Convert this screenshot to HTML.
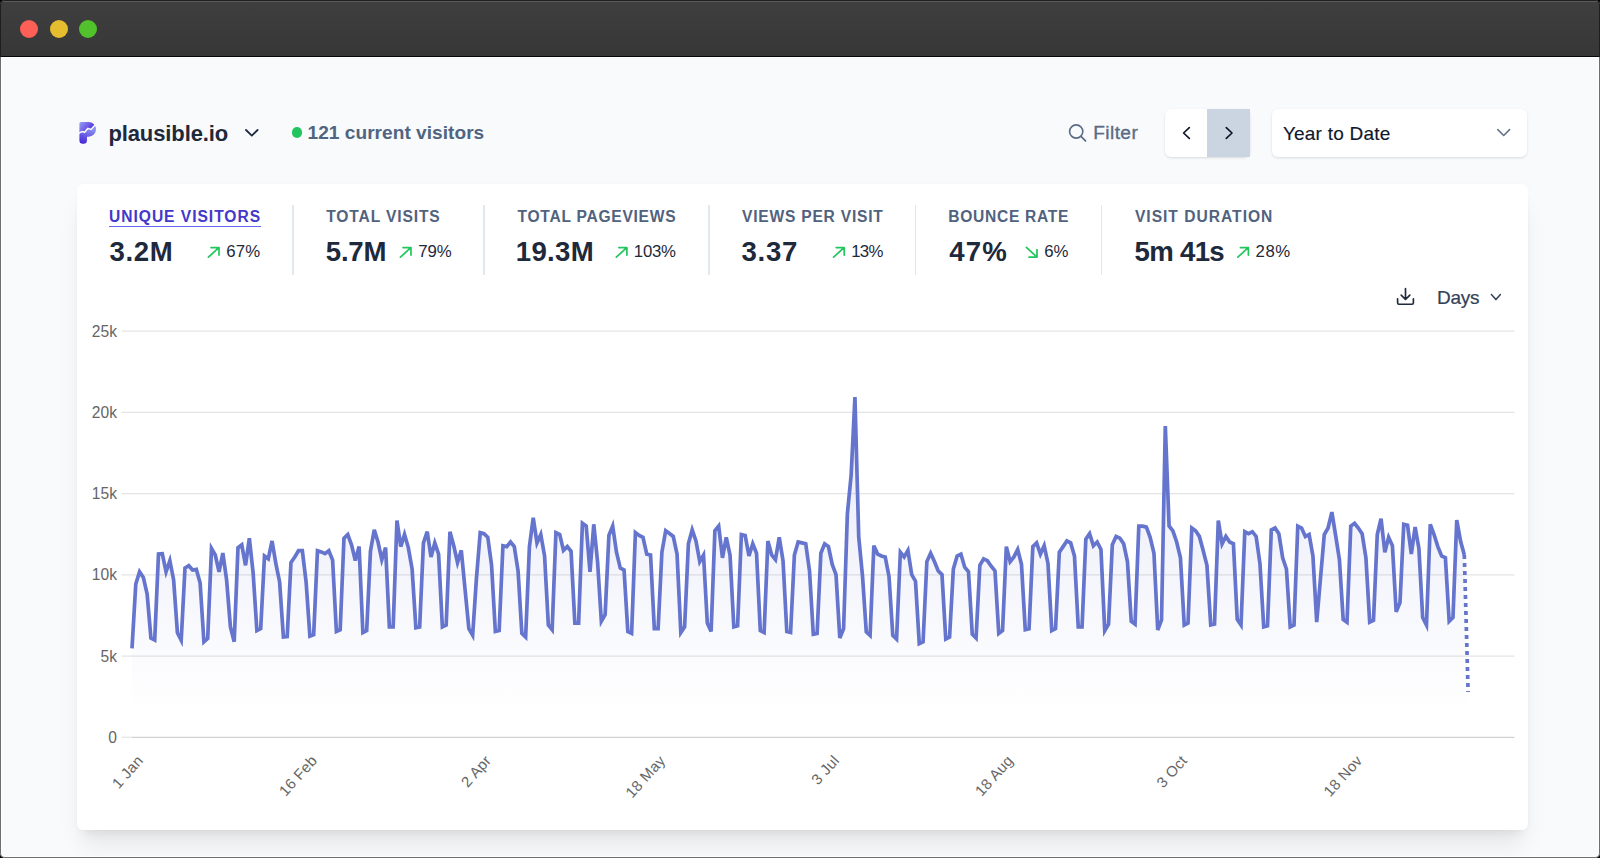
<!DOCTYPE html>
<html><head><meta charset="utf-8"><style>
html,body{margin:0;padding:0;width:1600px;height:858px;overflow:hidden;background:#000;}
body{font-family:"Liberation Sans",sans-serif;position:relative;}
.win{position:absolute;left:0;top:0;width:1600px;height:858px;border-radius:5px;overflow:hidden;background:#f8fafc;}
.frt{position:absolute;left:0;top:0;width:1600px;height:57px;box-sizing:border-box;border:1px solid #1e1e1e;border-bottom:0;border-radius:5px 5px 0 0;}
.frh{position:absolute;left:3px;top:1px;width:1594px;height:1px;background:#5c5c5c;}
.frc{position:absolute;left:0;top:57px;width:1600px;height:801px;box-sizing:border-box;border:1px solid #6e6e6e;border-top:0;border-radius:0 0 5px 5px;}
.frw{position:absolute;left:1px;top:57px;width:1598px;height:800px;box-sizing:border-box;border:1px solid #fff;border-top-color:#fff;border-radius:0 0 4px 4px;}
.bar{position:absolute;left:0;top:0;width:1600px;height:56px;background:linear-gradient(#3f3f3f,#373737);border-bottom:1px solid #080808;}
.dot{position:absolute;top:20px;width:18px;height:18px;border-radius:50%;}
.t{position:absolute;white-space:nowrap;}
.ic{position:absolute;overflow:visible;}
.card{position:absolute;left:77px;top:184px;width:1450.5px;height:646px;background:#fff;border-radius:6px;box-shadow:0 20px 25px -5px rgba(0,0,0,0.08),0 8px 10px -6px rgba(0,0,0,0.08),0 0 3px rgba(0,0,0,0.03);}
.btn{position:absolute;background:#fff;border-radius:6px;box-shadow:0 1px 3px rgba(0,0,0,0.1),0 1px 2px -1px rgba(0,0,0,0.1);}
.chart{position:absolute;left:0;top:0;}
.xl{position:absolute;width:200px;text-align:right;font-size:15px;line-height:15px;letter-spacing:0.25px;color:#666;transform-origin:100% 50%;transform:rotate(-48deg);white-space:nowrap;}
</style></head><body>
<div class="win">
<div class="bar">
<div class="dot" style="left:20px;background:#fe5f57;"></div>
<div class="dot" style="left:49.5px;background:#e6bd2e;"></div>
<div class="dot" style="left:79px;background:#52c22c;"></div>
</div>
<!-- logo -->
<svg class="ic" style="left:0;top:0" width="200" height="200" viewBox="0 0 200 200">
<defs>
<linearGradient id="lg1" gradientUnits="userSpaceOnUse" x1="80" y1="122" x2="93" y2="132"><stop offset="0" stop-color="#959cf4"/><stop offset="1" stop-color="#4a22d9"/></linearGradient>
<linearGradient id="lg2" gradientUnits="userSpaceOnUse" x1="88" y1="127" x2="82" y2="144"><stop offset="0" stop-color="#8e94f2"/><stop offset="1" stop-color="#4322d6"/></linearGradient>
<clipPath id="cpt"><path d="M70 110 H110 V119 L95.5 124.5 L91 129.4 L87.8 128.4 L84.6 132.3 L82.1 131.6 L70 137 Z"/></clipPath>
<clipPath id="cpb"><path d="M70 160 H110 V119 L95.5 124.5 L91 129.4 L87.8 128.4 L84.6 132.3 L82.1 131.6 L70 137 Z"/></clipPath>
</defs>
<path d="M79.4 123.5 Q79.4 122 81 122 H88.7 A7.35 7.35 0 0 1 88.7 136.7 H87 V140.3 A3.5 3.5 0 0 1 83.5 143.8 H82.9 A3.5 3.5 0 0 1 79.4 140.3 Z" fill="url(#lg1)" clip-path="url(#cpt)"/>
<path d="M79.4 123.5 Q79.4 122 81 122 H88.7 A7.35 7.35 0 0 1 88.7 136.7 H87 V140.3 A3.5 3.5 0 0 1 83.5 143.8 H82.9 A3.5 3.5 0 0 1 79.4 140.3 Z" fill="url(#lg2)" clip-path="url(#cpb)"/>
<path d="M78.5 133.4 L82.1 131.6 L84.6 132.3 L87.8 128.4 L91 129.4 L95.5 124.5" fill="none" stroke="#f8fafc" stroke-width="1.5"/>
</svg>
<svg class="ic" style="left:0;top:0" width="300" height="200" viewBox="0 0 300 200"><path d="M246 130 L251.8 135.6 L257.6 130" fill="none" stroke="#1f2a40" stroke-width="1.8" stroke-linecap="round" stroke-linejoin="round"/></svg>
<div style="position:absolute;left:291.7px;top:127.3px;width:10.6px;height:10.6px;border-radius:50%;background:#22c55e"></div>
<svg class="ic" style="left:0;top:0" width="1600" height="200" viewBox="0 0 1600 200">
<circle cx="1076.2" cy="131.5" r="6.6" fill="none" stroke="#5b6b85" stroke-width="1.6"/>
<path d="M1081 136.3 L1085.5 140.8" stroke="#5b6b85" stroke-width="1.7" stroke-linecap="round"/>
</svg>
<div class="btn" style="left:1164.8px;top:108.7px;width:85.3px;height:48.3px;"></div>
<div style="position:absolute;left:1207.3px;top:108.7px;width:42.8px;height:48.3px;background:#cbd5e1;"></div>
<svg class="ic" style="left:0;top:0" width="1600" height="200" viewBox="0 0 1600 200">
<path d="M1189.3 127.6 L1183.6 133 L1189.3 138.4" fill="none" stroke="#0f172a" stroke-width="1.7" stroke-linecap="round" stroke-linejoin="round"/>
<path d="M1226.3 127.6 L1232 133 L1226.3 138.4" fill="none" stroke="#0f172a" stroke-width="1.7" stroke-linecap="round" stroke-linejoin="round"/>
</svg>
<div class="btn" style="left:1272px;top:109px;width:255.2px;height:48px;"></div>
<svg class="ic" style="left:0;top:0" width="1600" height="200" viewBox="0 0 1600 200"><path d="M1497.8 129.6 L1503.7 135.5 L1509.6 129.6" fill="none" stroke="#64748b" stroke-width="1.6" stroke-linecap="round" stroke-linejoin="round"/></svg>
<div class="card"></div>
<svg class="chart" width="1600" height="858" viewBox="0 0 1600 858">
<defs><linearGradient id="gf" gradientUnits="userSpaceOnUse" x1="0" y1="300" x2="0" y2="713">
<stop offset="0" stop-color="#6574cd" stop-opacity="0.2"/><stop offset="1" stop-color="#6574cd" stop-opacity="0"/></linearGradient></defs>
<line x1="121.5" y1="737.30" x2="132" y2="737.30" stroke="#e6e6e6" stroke-width="1.3"/><line x1="132" y1="737.30" x2="1514.5" y2="737.30" stroke="#d2d2d2" stroke-width="1.3"/><line x1="121.5" y1="656.05" x2="1514.5" y2="656.05" stroke="#e4e4e4" stroke-width="1.3"/><line x1="121.5" y1="574.80" x2="1514.5" y2="574.80" stroke="#e4e4e4" stroke-width="1.3"/><line x1="121.5" y1="493.55" x2="1514.5" y2="493.55" stroke="#e4e4e4" stroke-width="1.3"/><line x1="121.5" y1="412.30" x2="1514.5" y2="412.30" stroke="#e4e4e4" stroke-width="1.3"/><line x1="121.5" y1="331.05" x2="1514.5" y2="331.05" stroke="#e4e4e4" stroke-width="1.3"/><text x="117" y="742.90" text-anchor="end" font-size="15.6" fill="#666">0</text><text x="117" y="661.65" text-anchor="end" font-size="15.6" fill="#666">5k</text><text x="117" y="580.40" text-anchor="end" font-size="15.6" fill="#666">10k</text><text x="117" y="499.15" text-anchor="end" font-size="15.6" fill="#666">15k</text><text x="117" y="417.90" text-anchor="end" font-size="15.6" fill="#666">20k</text><text x="117" y="336.65" text-anchor="end" font-size="15.6" fill="#666">25k</text>
<path d="M132.00,737.3 L132.00,648.30 L135.78,584.00 L139.57,571.80 L143.35,577.40 L147.14,594.00 L150.93,638.00 L154.71,640.00 L158.50,554.00 L162.28,553.70 L166.06,571.80 L169.85,560.60 L173.63,580.00 L177.42,632.80 L181.20,640.30 L184.99,568.00 L188.78,565.70 L192.56,570.00 L196.34,569.40 L200.13,583.00 L203.92,641.80 L207.70,638.40 L211.49,548.50 L215.27,555.00 L219.06,571.80 L222.84,553.00 L226.62,580.00 L230.41,626.90 L234.19,641.80 L237.98,547.60 L241.76,544.80 L245.55,565.30 L249.34,538.20 L253.12,572.80 L256.90,630.60 L260.69,628.70 L264.48,556.00 L268.26,558.80 L272.05,541.00 L275.83,563.40 L279.62,582.00 L283.40,637.00 L287.19,636.60 L290.97,562.50 L294.75,557.00 L298.54,550.70 L302.33,550.70 L306.11,582.00 L309.89,636.20 L313.68,634.70 L317.47,550.70 L321.25,551.90 L325.03,553.70 L328.82,550.70 L332.61,560.10 L336.39,631.50 L340.18,629.70 L343.96,538.20 L347.75,534.50 L351.53,544.80 L355.31,560.60 L359.10,546.60 L362.88,632.50 L366.67,630.60 L370.46,551.30 L374.24,529.90 L378.02,542.00 L381.81,559.70 L385.60,547.60 L389.38,626.90 L393.17,626.90 L396.95,520.50 L400.74,546.60 L404.52,534.50 L408.31,547.60 L412.09,569.00 L415.88,627.80 L419.66,626.90 L423.44,542.90 L427.23,531.70 L431.01,556.90 L434.80,542.90 L438.59,554.10 L442.37,626.90 L446.16,625.00 L449.94,531.70 L453.73,545.70 L457.51,562.50 L461.30,550.40 L465.08,589.60 L468.87,628.70 L472.65,635.30 L476.44,578.40 L480.22,532.60 L484.00,533.60 L487.79,537.30 L491.57,565.30 L495.36,631.50 L499.15,630.60 L502.93,545.70 L506.72,546.60 L510.50,542.00 L514.29,546.60 L518.07,570.90 L521.86,633.40 L525.64,637.10 L529.42,546.60 L533.21,517.70 L537.00,542.90 L540.78,534.50 L544.57,556.00 L548.35,625.00 L552.13,629.70 L555.92,532.60 L559.71,534.50 L563.49,550.40 L567.28,546.60 L571.06,551.30 L574.85,623.10 L578.63,623.10 L582.41,523.30 L586.20,526.10 L589.99,571.80 L593.77,524.30 L597.56,561.60 L601.34,621.30 L605.12,614.70 L608.91,535.40 L612.69,526.10 L616.48,552.20 L620.27,568.10 L624.05,570.00 L627.84,631.50 L631.62,633.40 L635.40,532.60 L639.19,535.40 L642.98,537.30 L646.76,554.10 L650.55,555.00 L654.33,628.70 L658.12,628.70 L661.90,552.20 L665.69,530.80 L669.47,533.60 L673.25,536.40 L677.04,554.10 L680.83,632.50 L684.61,626.90 L688.39,543.80 L692.18,529.90 L695.97,541.00 L699.75,561.60 L703.53,555.00 L707.32,623.10 L711.11,631.50 L714.89,530.80 L718.68,526.10 L722.46,557.80 L726.25,537.30 L730.03,555.00 L733.82,626.90 L737.60,625.90 L741.38,534.50 L745.17,535.40 L748.96,556.00 L752.74,543.80 L756.52,553.20 L760.31,630.60 L764.10,632.50 L767.88,541.00 L771.67,555.00 L775.45,559.70 L779.24,537.30 L783.02,560.60 L786.81,631.50 L790.59,632.50 L794.38,555.00 L798.16,542.00 L801.95,542.90 L805.73,543.80 L809.51,570.90 L813.30,634.30 L817.09,633.40 L820.87,553.20 L824.65,543.80 L828.44,546.60 L832.23,564.40 L836.01,574.60 L839.80,638.00 L843.58,628.70 L847.37,514.00 L851.15,475.00 L854.94,397.00 L858.72,537.00 L862.50,576.00 L866.29,632.00 L870.08,635.50 L873.86,545.70 L877.64,554.10 L881.43,556.00 L885.22,556.90 L889.00,576.50 L892.79,635.30 L896.57,639.00 L900.36,552.20 L904.14,556.90 L907.93,550.40 L911.71,574.60 L915.50,581.20 L919.28,643.70 L923.07,641.80 L926.85,561.60 L930.63,553.20 L934.42,561.60 L938.21,570.90 L941.99,574.60 L945.77,639.00 L949.56,637.10 L953.35,569.00 L957.13,556.00 L960.92,554.10 L964.70,567.20 L968.49,571.80 L972.27,634.30 L976.06,638.10 L979.84,565.30 L983.62,558.80 L987.41,560.60 L991.20,566.20 L994.98,570.90 L998.76,633.40 L1002.55,630.60 L1006.34,546.60 L1010.12,561.60 L1013.91,556.90 L1017.69,549.40 L1021.48,564.40 L1025.26,629.70 L1029.05,628.70 L1032.83,546.60 L1036.62,542.90 L1040.40,554.10 L1044.18,545.70 L1047.97,563.40 L1051.76,630.60 L1055.54,628.70 L1059.33,552.20 L1063.11,546.60 L1066.89,541.00 L1070.68,542.90 L1074.47,556.00 L1078.25,626.90 L1082.04,626.90 L1085.82,539.20 L1089.61,533.60 L1093.39,545.70 L1097.18,542.00 L1100.96,549.40 L1104.74,630.60 L1108.53,624.10 L1112.32,544.80 L1116.10,536.40 L1119.88,538.20 L1123.67,543.80 L1127.45,561.60 L1131.24,621.30 L1135.03,624.10 L1138.81,526.10 L1142.60,526.10 L1146.38,527.10 L1150.16,537.30 L1153.95,553.20 L1157.74,630.00 L1161.52,620.00 L1165.31,426.00 L1169.09,526.00 L1172.88,530.80 L1176.66,542.00 L1180.44,557.80 L1184.23,625.00 L1188.02,623.10 L1191.80,528.00 L1195.59,530.80 L1199.37,536.40 L1203.15,550.40 L1206.94,565.30 L1210.73,625.00 L1214.51,624.10 L1218.30,520.50 L1222.08,543.80 L1225.87,536.40 L1229.65,542.00 L1233.43,543.80 L1237.22,619.40 L1241.01,625.00 L1244.79,531.70 L1248.58,533.60 L1252.36,531.70 L1256.14,536.40 L1259.93,563.40 L1263.72,626.90 L1267.50,625.90 L1271.29,529.90 L1275.07,528.00 L1278.86,533.60 L1282.64,557.80 L1286.42,569.00 L1290.21,626.90 L1294.00,625.00 L1297.78,526.10 L1301.57,528.00 L1305.35,536.40 L1309.13,534.50 L1312.92,556.00 L1316.71,622.20 L1320.49,578.40 L1324.28,534.50 L1328.06,528.00 L1331.85,512.10 L1335.63,535.40 L1339.41,559.70 L1343.20,619.40 L1346.99,622.20 L1350.77,526.10 L1354.56,523.30 L1358.34,528.00 L1362.12,533.60 L1365.91,557.80 L1369.69,622.20 L1373.48,620.30 L1377.27,534.50 L1381.05,518.70 L1384.84,552.20 L1388.62,537.30 L1392.40,545.70 L1396.19,611.90 L1399.98,602.60 L1403.76,524.30 L1407.55,525.20 L1411.33,554.10 L1415.12,527.10 L1418.90,548.50 L1422.68,617.50 L1426.47,625.00 L1430.26,524.30 L1434.04,534.50 L1437.83,546.60 L1441.61,556.00 L1445.39,557.80 L1449.18,621.30 L1452.97,617.50 L1456.75,520.10 L1460.54,541.00 L1464.32,555.00 L1468.11,692.00 L1468.11,737.3 Z" fill="url(#gf)"/>
<polyline points="132.00,648.30 135.78,584.00 139.57,571.80 143.35,577.40 147.14,594.00 150.93,638.00 154.71,640.00 158.50,554.00 162.28,553.70 166.06,571.80 169.85,560.60 173.63,580.00 177.42,632.80 181.20,640.30 184.99,568.00 188.78,565.70 192.56,570.00 196.34,569.40 200.13,583.00 203.92,641.80 207.70,638.40 211.49,548.50 215.27,555.00 219.06,571.80 222.84,553.00 226.62,580.00 230.41,626.90 234.19,641.80 237.98,547.60 241.76,544.80 245.55,565.30 249.34,538.20 253.12,572.80 256.90,630.60 260.69,628.70 264.48,556.00 268.26,558.80 272.05,541.00 275.83,563.40 279.62,582.00 283.40,637.00 287.19,636.60 290.97,562.50 294.75,557.00 298.54,550.70 302.33,550.70 306.11,582.00 309.89,636.20 313.68,634.70 317.47,550.70 321.25,551.90 325.03,553.70 328.82,550.70 332.61,560.10 336.39,631.50 340.18,629.70 343.96,538.20 347.75,534.50 351.53,544.80 355.31,560.60 359.10,546.60 362.88,632.50 366.67,630.60 370.46,551.30 374.24,529.90 378.02,542.00 381.81,559.70 385.60,547.60 389.38,626.90 393.17,626.90 396.95,520.50 400.74,546.60 404.52,534.50 408.31,547.60 412.09,569.00 415.88,627.80 419.66,626.90 423.44,542.90 427.23,531.70 431.01,556.90 434.80,542.90 438.59,554.10 442.37,626.90 446.16,625.00 449.94,531.70 453.73,545.70 457.51,562.50 461.30,550.40 465.08,589.60 468.87,628.70 472.65,635.30 476.44,578.40 480.22,532.60 484.00,533.60 487.79,537.30 491.57,565.30 495.36,631.50 499.15,630.60 502.93,545.70 506.72,546.60 510.50,542.00 514.29,546.60 518.07,570.90 521.86,633.40 525.64,637.10 529.42,546.60 533.21,517.70 537.00,542.90 540.78,534.50 544.57,556.00 548.35,625.00 552.13,629.70 555.92,532.60 559.71,534.50 563.49,550.40 567.28,546.60 571.06,551.30 574.85,623.10 578.63,623.10 582.41,523.30 586.20,526.10 589.99,571.80 593.77,524.30 597.56,561.60 601.34,621.30 605.12,614.70 608.91,535.40 612.69,526.10 616.48,552.20 620.27,568.10 624.05,570.00 627.84,631.50 631.62,633.40 635.40,532.60 639.19,535.40 642.98,537.30 646.76,554.10 650.55,555.00 654.33,628.70 658.12,628.70 661.90,552.20 665.69,530.80 669.47,533.60 673.25,536.40 677.04,554.10 680.83,632.50 684.61,626.90 688.39,543.80 692.18,529.90 695.97,541.00 699.75,561.60 703.53,555.00 707.32,623.10 711.11,631.50 714.89,530.80 718.68,526.10 722.46,557.80 726.25,537.30 730.03,555.00 733.82,626.90 737.60,625.90 741.38,534.50 745.17,535.40 748.96,556.00 752.74,543.80 756.52,553.20 760.31,630.60 764.10,632.50 767.88,541.00 771.67,555.00 775.45,559.70 779.24,537.30 783.02,560.60 786.81,631.50 790.59,632.50 794.38,555.00 798.16,542.00 801.95,542.90 805.73,543.80 809.51,570.90 813.30,634.30 817.09,633.40 820.87,553.20 824.65,543.80 828.44,546.60 832.23,564.40 836.01,574.60 839.80,638.00 843.58,628.70 847.37,514.00 851.15,475.00 854.94,397.00 858.72,537.00 862.50,576.00 866.29,632.00 870.08,635.50 873.86,545.70 877.64,554.10 881.43,556.00 885.22,556.90 889.00,576.50 892.79,635.30 896.57,639.00 900.36,552.20 904.14,556.90 907.93,550.40 911.71,574.60 915.50,581.20 919.28,643.70 923.07,641.80 926.85,561.60 930.63,553.20 934.42,561.60 938.21,570.90 941.99,574.60 945.77,639.00 949.56,637.10 953.35,569.00 957.13,556.00 960.92,554.10 964.70,567.20 968.49,571.80 972.27,634.30 976.06,638.10 979.84,565.30 983.62,558.80 987.41,560.60 991.20,566.20 994.98,570.90 998.76,633.40 1002.55,630.60 1006.34,546.60 1010.12,561.60 1013.91,556.90 1017.69,549.40 1021.48,564.40 1025.26,629.70 1029.05,628.70 1032.83,546.60 1036.62,542.90 1040.40,554.10 1044.18,545.70 1047.97,563.40 1051.76,630.60 1055.54,628.70 1059.33,552.20 1063.11,546.60 1066.89,541.00 1070.68,542.90 1074.47,556.00 1078.25,626.90 1082.04,626.90 1085.82,539.20 1089.61,533.60 1093.39,545.70 1097.18,542.00 1100.96,549.40 1104.74,630.60 1108.53,624.10 1112.32,544.80 1116.10,536.40 1119.88,538.20 1123.67,543.80 1127.45,561.60 1131.24,621.30 1135.03,624.10 1138.81,526.10 1142.60,526.10 1146.38,527.10 1150.16,537.30 1153.95,553.20 1157.74,630.00 1161.52,620.00 1165.31,426.00 1169.09,526.00 1172.88,530.80 1176.66,542.00 1180.44,557.80 1184.23,625.00 1188.02,623.10 1191.80,528.00 1195.59,530.80 1199.37,536.40 1203.15,550.40 1206.94,565.30 1210.73,625.00 1214.51,624.10 1218.30,520.50 1222.08,543.80 1225.87,536.40 1229.65,542.00 1233.43,543.80 1237.22,619.40 1241.01,625.00 1244.79,531.70 1248.58,533.60 1252.36,531.70 1256.14,536.40 1259.93,563.40 1263.72,626.90 1267.50,625.90 1271.29,529.90 1275.07,528.00 1278.86,533.60 1282.64,557.80 1286.42,569.00 1290.21,626.90 1294.00,625.00 1297.78,526.10 1301.57,528.00 1305.35,536.40 1309.13,534.50 1312.92,556.00 1316.71,622.20 1320.49,578.40 1324.28,534.50 1328.06,528.00 1331.85,512.10 1335.63,535.40 1339.41,559.70 1343.20,619.40 1346.99,622.20 1350.77,526.10 1354.56,523.30 1358.34,528.00 1362.12,533.60 1365.91,557.80 1369.69,622.20 1373.48,620.30 1377.27,534.50 1381.05,518.70 1384.84,552.20 1388.62,537.30 1392.40,545.70 1396.19,611.90 1399.98,602.60 1403.76,524.30 1407.55,525.20 1411.33,554.10 1415.12,527.10 1418.90,548.50 1422.68,617.50 1426.47,625.00 1430.26,524.30 1434.04,534.50 1437.83,546.60 1441.61,556.00 1445.39,557.80 1449.18,621.30 1452.97,617.50 1456.75,520.10 1460.54,541.00 1464.32,555.00" fill="none" stroke="#6574cd" stroke-width="3.7" stroke-linejoin="miter" stroke-miterlimit="4"/>
<line x1="1464.32" y1="555.00" x2="1468.11" y2="692.00" stroke="#6574cd" stroke-width="3.7" stroke-dasharray="4 4"/>
</svg>
<svg class="ic" style="left:0;top:0" width="1600" height="400" viewBox="0 0 1600 400">
<path d="M1405.5 288.5 V299.5 M1401.2 295.2 L1405.5 299.5 L1409.8 295.2 M1397.6 298.7 V302.8 Q1397.6 304.2 1399 304.2 H1412 Q1413.4 304.2 1413.4 302.8 V298.7" fill="none" stroke="#1e293b" stroke-width="1.65" stroke-linecap="round" stroke-linejoin="round"/>
<path d="M1491.4 294.6 L1495.9 299.6 L1500.4 294.6" fill="none" stroke="#334155" stroke-width="1.5" stroke-linecap="round" stroke-linejoin="round"/>
</svg>
<div class="t" style="left:108.42px;top:121px;font-size:22px;line-height:25px;color:#1e293b;font-weight:bold;letter-spacing:-0.112px;">plausible.io</div><div class="t" style="left:307.56px;top:122px;font-size:19.1px;line-height:21px;color:#506480;font-weight:bold;letter-spacing:0.026px;">121 current visitors</div><div class="t" style="left:1093.21px;top:122px;font-size:19.1px;line-height:21px;color:#5b6b85;font-weight:normal;letter-spacing:0.428px;-webkit-text-stroke:0.35px #5b6b85;">Filter</div><div class="t" style="left:1282.90px;top:123px;font-size:19px;line-height:21px;color:#0f172a;font-weight:normal;letter-spacing:0.222px;-webkit-text-stroke:0.15px #0f172a;">Year to Date</div><div class="t" style="left:1437.02px;top:287px;font-size:19px;line-height:21px;color:#334155;font-weight:normal;letter-spacing:-0.27px;-webkit-text-stroke:0.2px #334155;">Days</div><div class="t" style="left:109.02px;top:208px;font-size:15.6px;line-height:17px;color:#4338ca;font-weight:bold;letter-spacing:0.972px;">UNIQUE VISITORS</div><div class="t" style="left:109.57px;top:236px;font-size:27.6px;line-height:31px;color:#1e293b;font-weight:bold;letter-spacing:0.584px;">3.2M</div><div class="t" style="left:226.21px;top:242px;font-size:16.8px;line-height:19px;color:#1e293b;font-weight:normal;letter-spacing:0.132px;">67%</div><svg class="ic" style="left:0;top:0" width="1600" height="300" viewBox="0 0 1600 300"><path d="M208.40 257.2 L218.80 247.6 M211.00 247.6 H219.00 V255.1" fill="none" stroke="#22c55e" stroke-width="1.7" stroke-linecap="round" stroke-linejoin="round"/></svg><div style="position:absolute;left:109px;top:225.5px;width:151.7px;height:1.5px;background:#6366f1"></div><div class="t" style="left:326.20px;top:208px;font-size:15.6px;line-height:17px;color:#51627e;font-weight:bold;letter-spacing:0.865px;">TOTAL VISITS</div><div class="t" style="left:325.77px;top:236px;font-size:27.6px;line-height:31px;color:#1e293b;font-weight:bold;letter-spacing:-0.233px;">5.7M</div><div class="t" style="left:418.21px;top:242px;font-size:16.8px;line-height:19px;color:#1e293b;font-weight:normal;letter-spacing:-0.068px;">79%</div><svg class="ic" style="left:0;top:0" width="1600" height="300" viewBox="0 0 1600 300"><path d="M400.40 257.2 L410.80 247.6 M403.00 247.6 H411.00 V255.1" fill="none" stroke="#22c55e" stroke-width="1.7" stroke-linecap="round" stroke-linejoin="round"/></svg><div class="t" style="left:517.50px;top:208px;font-size:15.6px;line-height:17px;color:#51627e;font-weight:bold;letter-spacing:0.729px;">TOTAL PAGEVIEWS</div><div class="t" style="left:515.77px;top:236px;font-size:27.6px;line-height:31px;color:#1e293b;font-weight:bold;letter-spacing:0.311px;">19.3M</div><div class="t" style="left:633.85px;top:242px;font-size:16.8px;line-height:19px;color:#1e293b;font-weight:normal;letter-spacing:-0.273px;">103%</div><svg class="ic" style="left:0;top:0" width="1600" height="300" viewBox="0 0 1600 300"><path d="M616.30 257.2 L626.70 247.6 M618.90 247.6 H626.90 V255.1" fill="none" stroke="#22c55e" stroke-width="1.7" stroke-linecap="round" stroke-linejoin="round"/></svg><div class="t" style="left:742.00px;top:208px;font-size:15.6px;line-height:17px;color:#51627e;font-weight:bold;letter-spacing:0.778px;">VIEWS PER VISIT</div><div class="t" style="left:741.57px;top:236px;font-size:27.6px;line-height:31px;color:#1e293b;font-weight:bold;letter-spacing:0.711px;">3.37</div><div class="t" style="left:851.15px;top:242px;font-size:16.8px;line-height:19px;color:#1e293b;font-weight:normal;letter-spacing:-0.687px;">13%</div><svg class="ic" style="left:0;top:0" width="1600" height="300" viewBox="0 0 1600 300"><path d="M833.60 257.2 L844.00 247.6 M836.20 247.6 H844.20 V255.1" fill="none" stroke="#22c55e" stroke-width="1.7" stroke-linecap="round" stroke-linejoin="round"/></svg><div class="t" style="left:948.32px;top:208px;font-size:15.6px;line-height:17px;color:#51627e;font-weight:bold;letter-spacing:0.684px;">BOUNCE RATE</div><div class="t" style="left:949.30px;top:236px;font-size:27.6px;line-height:31px;color:#1e293b;font-weight:bold;letter-spacing:1.075px;">47%</div><div class="t" style="left:1044.21px;top:242px;font-size:16.8px;line-height:19px;color:#1e293b;font-weight:normal;letter-spacing:0.007px;">6%</div><svg class="ic" style="left:0;top:0" width="1600" height="300" viewBox="0 0 1600 300"><path d="M1026.40 247.4 L1036.80 257.0 M1029.00 257.1 H1037.00 V249.6" fill="none" stroke="#22c55e" stroke-width="1.7" stroke-linecap="round" stroke-linejoin="round"/></svg><div class="t" style="left:1134.90px;top:208px;font-size:15.6px;line-height:17px;color:#51627e;font-weight:bold;letter-spacing:1.001px;">VISIT DURATION</div><div class="t" style="left:1134.47px;top:236px;font-size:27.6px;line-height:31px;color:#1e293b;font-weight:bold;letter-spacing:-0.672px;">5m 41s</div><div class="t" style="left:1255.61px;top:242px;font-size:16.8px;line-height:19px;color:#1e293b;font-weight:normal;letter-spacing:0.532px;">28%</div><svg class="ic" style="left:0;top:0" width="1600" height="300" viewBox="0 0 1600 300"><path d="M1237.80 257.2 L1248.20 247.6 M1240.40 247.6 H1248.40 V255.1" fill="none" stroke="#22c55e" stroke-width="1.7" stroke-linecap="round" stroke-linejoin="round"/></svg><div style="position:absolute;left:292.35px;top:205px;width:1.5px;height:70px;background:#e2e8f0"></div><div style="position:absolute;left:483.25px;top:205px;width:1.5px;height:70px;background:#e2e8f0"></div><div style="position:absolute;left:708.35px;top:205px;width:1.5px;height:70px;background:#e2e8f0"></div><div style="position:absolute;left:914.95px;top:205px;width:1.5px;height:70px;background:#e2e8f0"></div><div style="position:absolute;left:1100.85px;top:205px;width:1.5px;height:70px;background:#e2e8f0"></div>
<div class="xl" style="left:-60.20px;top:749.8px">1 Jan</div><div class="xl" style="left:113.91px;top:749.8px">16 Feb</div><div class="xl" style="left:288.02px;top:749.8px">2 Apr</div><div class="xl" style="left:462.13px;top:749.8px">18 May</div><div class="xl" style="left:636.24px;top:749.8px">3 Jul</div><div class="xl" style="left:810.35px;top:749.8px">18 Aug</div><div class="xl" style="left:984.46px;top:749.8px">3 Oct</div><div class="xl" style="left:1158.57px;top:749.8px">18 Nov</div>
</div>
<div class="frw"></div><div class="frc"></div><div class="frt"></div><div class="frh"></div>
</body></html>
